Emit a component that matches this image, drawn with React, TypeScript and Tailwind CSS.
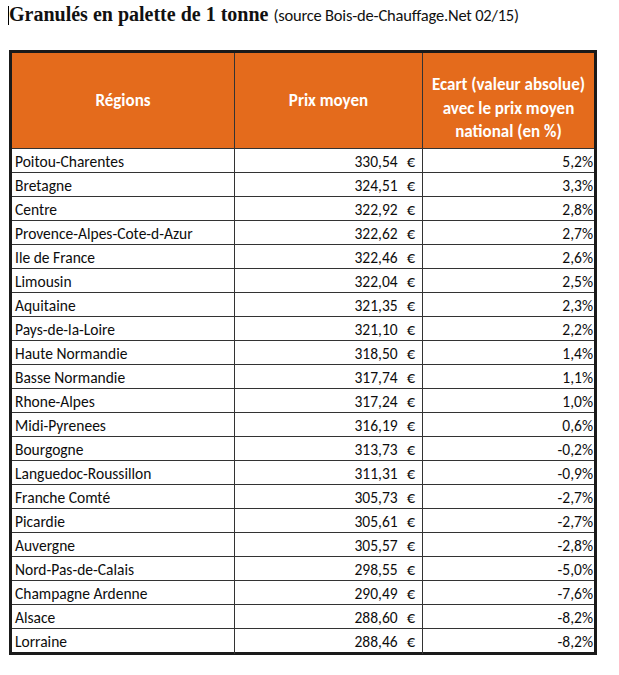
const rows: [string, string, string][] = [
  ["Poitou-Charentes", "330,54", "5,2%"],
  ["Bretagne", "324,51", "3,3%"],
  ["Centre", "322,92", "2,8%"],
  ["Provence-Alpes-Cote-d-Azur", "322,62", "2,7%"],
  ["Ile de France", "322,46", "2,6%"],
  ["Limousin", "322,04", "2,5%"],
  ["Aquitaine", "321,35", "2,3%"],
  ["Pays-de-la-Loire", "321,10", "2,2%"],
  ["Haute Normandie", "318,50", "1,4%"],
  ["Basse Normandie", "317,74", "1,1%"],
  ["Rhone-Alpes", "317,24", "1,0%"],
  ["Midi-Pyrenees", "316,19", "0,6%"],
  ["Bourgogne", "313,73", "-0,2%"],
  ["Languedoc-Roussillon", "311,31", "-0,9%"],
  ["Franche Comté", "305,73", "-2,7%"],
  ["Picardie", "305,61", "-2,7%"],
  ["Auvergne", "305,57", "-2,8%"],
  ["Nord-Pas-de-Calais", "298,55", "-5,0%"],
  ["Champagne Ardenne", "290,49", "-7,6%"],
  ["Alsace", "288,60", "-8,2%"],
  ["Lorraine", "288,46", "-8,2%"],
];

export default function App() {
  return (
    <div className="w-[619px] h-[675px] bg-white overflow-hidden">
      {/* titre */}
      <div className="flex items-baseline pl-2 pt-[2px] h-[50px]">
        <span className="w-px h-[19px] bg-black self-start mt-[4px]"></span>
        <span className="font-['Liberation_Serif',serif] font-bold text-[20px] text-[#111] leading-6">
          Granulés en palette de 1 tonne
        </span>
        <span className="ml-[5px] font-['Carlito','Lato',sans-serif] text-[16.5px] text-[#111] tracking-[-0.2px]">
          (source Bois-de-Chauffage.Net 02/15)
        </span>
      </div>

      <div className="ml-[9px] w-[588px] border-[3px] border-[#1a1a1a] font-['Carlito','Lato',sans-serif] text-[15.5px] text-[#0d0d0d]">
        <div className="grid grid-cols-[223px_188px_1fr] h-[96px] bg-[#e46b1c] text-white font-bold text-[17px] leading-[23.5px] border-b border-[#333]">
          <div className="flex items-center justify-center border-r border-[#333]">Régions</div>
          <div className="flex items-center justify-center border-r border-[#333]">Prix moyen</div>
          <div className="flex items-center justify-center text-center pt-4">
            Ecart (valeur absolue)
            <br />
            avec le prix moyen
            <br />
            national (en %)
          </div>
        </div>
        {rows.map(([region, prix, ecart], i) => (
          <div
            key={region}
            className={
              i < rows.length - 1
                ? "grid grid-cols-[223px_188px_1fr] h-[24px] border-b border-[#333]"
                : "grid grid-cols-[223px_188px_1fr] h-[23px]"
            }
          >
            <div className="flex items-center pl-[3px] border-r border-[#333]">{region}</div>
            <div className="flex items-center justify-end pr-[7px] border-r border-[#333] whitespace-pre">
              {prix}
              <span className="ml-[9px] text-[16.5px]">€</span>
            </div>
            <div className="flex items-center justify-end pr-[1px]">{ecart}</div>
          </div>
        ))}
      </div>
    </div>
  );
}
